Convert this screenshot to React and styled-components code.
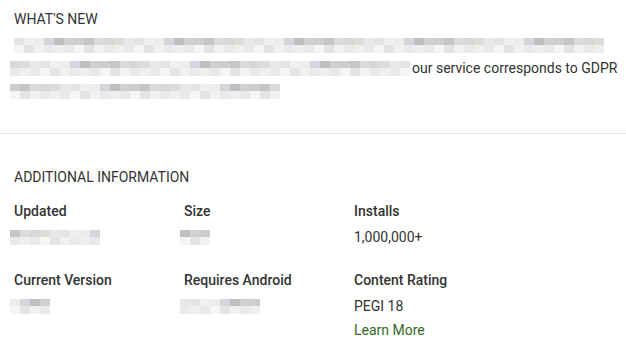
import React from "react";
import styled, { createGlobalStyle } from "styled-components";

const GlobalStyle = createGlobalStyle`
  body {
    margin: 0;
    background: #fff;
    font-family: Roboto, "Liberation Sans", Arial, sans-serif;
    color: #333;
  }
`;

const Page = styled.div`
  width: 626px;
  height: 351px;
  overflow: hidden;
  background: #fff;
`;

const Section = styled.div`
  padding: ${props => props.pad};
  border-bottom: ${props => (props.divided ? "1px solid #e6e6e6" : "none")};
`;

const Title = styled.div`
  font-size: 14px;
  line-height: 24px;
  text-transform: uppercase;
  color: #333;
  padding-left: 14px;
  margin-bottom: ${props => props.gap || 0}px;
`;

const Body = styled.div`
  font-size: 14px;
  line-height: 23px;
  color: #333;
`;

const Line = styled.div`
  display: flex;
  align-items: center;
  height: 23px;
  padding-left: ${props => props.indent || 10}px;
`;

const Blur = styled.div`
  display: grid;
  grid-template-rows: 7px 8px;
  grid-auto-flow: column;
  grid-auto-columns: ${props => props.cell || 10}px;
  flex-shrink: 0;
`;

const Cell = styled.div`
  background: ${props => props.shade};
`;

const Grid = styled.div`
  display: grid;
  grid-template-columns: 170px 170px 170px;
  padding-left: 14px;
  row-gap: 21px;
`;

const Item = styled.div`
  display: flex;
  flex-direction: column;
`;

const Label = styled.div`
  font-size: 14px;
  font-weight: 500;
  line-height: 20px;
  color: #333;
`;

const Value = styled.div`
  font-size: 14px;
  line-height: 24px;
  height: 24px;
  display: flex;
  align-items: center;
  margin-top: 4px;
  margin-left: ${props => props.shift || 0}px;
  color: #333;
`;

const Link = styled.a`
  font-size: 14px;
  line-height: 24px;
  color: #33691e;
  text-decoration: none;
`;

const shades = ["#d0d0d0", "#e4e4e4", "#c6c6c6", "#ececec", "#d8d8d8", "#bfbfbf", "#e8e8e8", "#cdcdcd", "#f0f0f0", "#dadada", "#d3d6dc", "#dfdcd7"];
const lights = ["#eaeaea", "#f1f1f1", "#e4e4e4", "#f5f5f5", "#e9e9e9", "#efefef"];

function BlurText({ width, seed = 1, cell = 10 }) {
  const n = Math.round(width / cell);
  const cells = [];
  for (let i = 0; i < n; i++) {
    const a = (i * 7 + seed * 13) % shades.length;
    const b = (i * 5 + seed * 3) % lights.length;
    cells.push(<Cell key={"a" + i} shade={shades[a]} />);
    cells.push(<Cell key={"b" + i} shade={lights[b]} />);
  }
  return <Blur cell={cell}>{cells}</Blur>;
}

export default function App() {
  return (
    <Page>
      <GlobalStyle />
      <Section pad="7px 0 30px" divided>
        <Title gap={3}>What's New</Title>
        <Body>
          <Line indent={14}>
            <BlurText width={590} seed={1} />
          </Line>
          <Line>
            <BlurText width={400} seed={4} />
            <span style={{ marginLeft: 2 }}>our service corresponds to GDPR</span>
          </Line>
          <Line>
            <BlurText width={270} seed={7} />
          </Line>
        </Body>
      </Section>
      <Section pad="31px 0 0">
        <Title gap={12}>Additional Information</Title>
        <Grid>
          <Item>
            <Label>Updated</Label>
            <Value shift={-4}>
              <BlurText width={90} seed={2} />
            </Value>
          </Item>
          <Item>
            <Label>Size</Label>
            <Value shift={-4}>
              <BlurText width={30} seed={5} />
            </Value>
          </Item>
          <Item>
            <Label>Installs</Label>
            <Value>1,000,000+</Value>
          </Item>
          <Item>
            <Label>Current Version</Label>
            <Value shift={-4}>
              <BlurText width={40} seed={3} />
            </Value>
          </Item>
          <Item>
            <Label>Requires Android</Label>
            <Value shift={-4}>
              <BlurText width={80} seed={6} />
            </Value>
          </Item>
          <Item>
            <Label>Content Rating</Label>
            <Value>PEGI 18</Value>
            <Link href="#">Learn More</Link>
          </Item>
        </Grid>
      </Section>
    </Page>
  );
}
